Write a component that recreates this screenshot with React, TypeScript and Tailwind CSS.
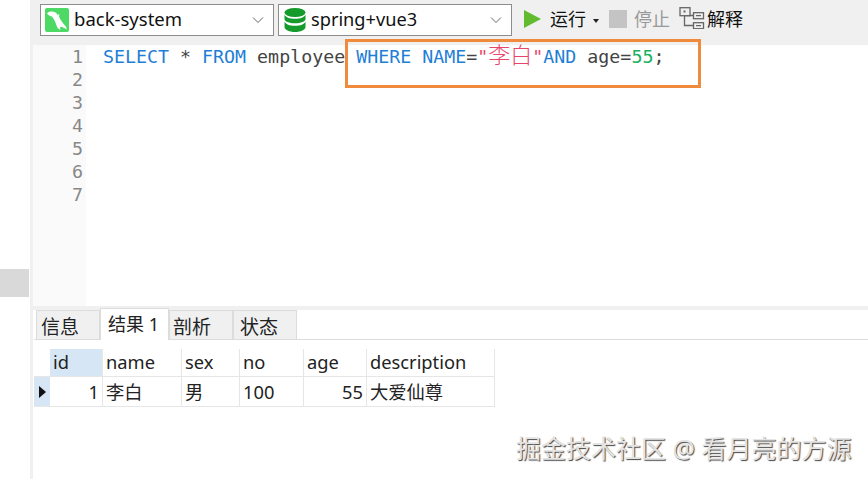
const uiFont = "font-['Noto_Sans','Noto_Sans_CJK_SC',sans-serif]";

function Chevron() {
  return (
    <svg width="12" height="8" viewBox="0 0 12 8" fill="none" stroke="#666" strokeWidth="1">
      <path d="M1 1.5l5 5 5-5" />
    </svg>
  );
}

function MysqlIcon() {
  return (
    <svg width="24" height="24" viewBox="0 0 24 24" className="shrink-0">
      <rect width="24" height="24" rx="2" fill="#4cd964" />
      <path
        d="M2 5.500C4 3 8 3 10.500 4.500c1 .5 1.500 1.500 2 2.500.5-.8 1.200-1 2-.8-.5 1-.6 2-.2 3 1 2.500 3 5 5.700 8.300 1 1 1.500 2.500 2 4-2.500-1.500-4.500-2.500-6.500-2.800-.5 1-.5 2 0 3.300-2-.8-3.500-2.500-4.200-5C10.500 14 9 11 7 8.500 5.500 8.300 3.500 7.500 2 5.500z"
        fill="#fff"
      />
    </svg>
  );
}

function DbIcon() {
  return (
    <svg width="24" height="24" viewBox="0 0 24 24" className="shrink-0">
      <ellipse cx="12" cy="4.500" rx="10.500" ry="4.500" fill="#159a2c" />
      <path d="M1.500 6.500V11c0 2.500 4.700 4.300 10.500 4.300s10.500-1.800 10.500-4.300V6.500c-1 2.800-5 4.300-10.500 4.300S2.500 9.300 1.500 6.500z" fill="#159a2c" />
      <path d="M1.500 13.500V19c0 2.800 4.700 5 10.500 5s10.500-2.200 10.500-5v-5.500c-1 2.800-5 4.300-10.500 4.300S2.500 16.300 1.500 13.500z" fill="#159a2c" />
    </svg>
  );
}

function ExplainIcon() {
  return (
    <svg width="26" height="22" viewBox="0 0 26 22" fill="#f0f0f0" stroke="#666" strokeWidth="1.300" className="shrink-0">
      <path d="M5.500 9v9.500H14M5.500 8.500v0M5.500 8.500H14" fill="none" />
      <rect x="1" y="0.700" width="10" height="8" />
      <rect x="4.500" y="3.500" width="2" height="2" fill="#666" stroke="none" />
      <rect x="14.500" y="5.700" width="10" height="6" />
      <rect x="14.500" y="15.700" width="10" height="6" />
      <path d="M17 8.700h5M17 18.700h5" fill="none" />
    </svg>
  );
}

function Combo({ icon, label, width, size, gap }: { icon: React.ReactNode; label: string; width: string; size: string; gap: string }) {
  return (
    <div className={`${width} h-[32px] border border-[#8c8c8c] bg-white flex items-center pl-[4px] pr-[9px]`}>
      {icon}
      <span className={`${gap} ${size} text-[#111] flex-1 leading-none -mt-[2px]`}>{label}</span>
      <Chevron />
    </div>
  );
}

function Tab({ label, active, width, pad }: { label: string; active?: boolean; width: string; pad: string }) {
  if (active) {
    return (
      <div className={`${width} h-[32px] bg-white border-x border-t border-[#dcdcdc] ${pad} pt-[3px] text-[18px] leading-[24px] text-[#222] -mb-px relative`}>
        {label}
      </div>
    );
  }
  return (
    <div className={`${width} h-[29px] bg-[#f0f0f0] border-r border-t border-l border-[#dcdcdc] ${pad} pt-[4px] text-[19px] leading-[24px] text-[#222]`}>
      {label}
    </div>
  );
}

const columns = "grid-cols-[16px_53px_79px_58px_64px_63px_128px]";

function HeaderCell({ label, active }: { label: string; active?: boolean }) {
  return (
    <div className={`border-r border-b border-[#e6e6e6] pl-[3px] leading-[26px] h-[28px] ${active ? "bg-[#d6e6f5]" : "bg-white"}`}>
      {label}
    </div>
  );
}

function Cell({ label, right }: { label: string; right?: boolean }) {
  return (
    <div className={`border-r border-b border-[#e6e6e6] leading-[29px] ${right ? "text-right pr-[3px]" : "pl-[3px]"}`}>
      {label}
    </div>
  );
}

export default function App() {
  return (
    <div className={`${uiFont} relative flex w-[868px] h-[479px] overflow-hidden bg-white`}>
      {/* left connection list */}
      <div className="w-[30px] shrink-0">
        <div className="mt-[269px] h-[28px] w-[29px] bg-[#d9d9d9]" />
      </div>

      <div className="flex-1 flex flex-col min-w-0 border-l-[3px] border-[#f0f0f0]">
        {/* toolbar */}
        <div className="h-[45px] shrink-0 bg-[#f0f0f0] flex items-start pt-[4px] pl-[7px] text-[18px]">
          <Combo icon={<MysqlIcon />} label="back-system" width="w-[234px]" size="text-[18.5px]" gap="ml-[5px]" />
          <div className="w-[4px]" />
          <Combo icon={<DbIcon />} label="spring+vue3" width="w-[234px]" size="text-[18.2px]" gap="ml-[4px]" />
          <svg width="18" height="18" viewBox="0 0 18 18" className="ml-[12px] mt-[6px]">
            <path d="M0 0l17 9-17 9z" fill="#62bb2e" />
          </svg>
          <span className="ml-[8px] mt-[2px] leading-[26px] text-[#111]">运行</span>
          <svg width="6" height="4" viewBox="0 0 6 4" className="ml-[7px] mt-[15px]">
            <path d="M0 0h6L3 4z" fill="#222" />
          </svg>
          <div className="ml-[10px] mt-[6px] w-[18px] h-[18px] bg-[#c4c4c4]" />
          <span className="ml-[7px] mt-[2px] leading-[26px] text-[#999]">停止</span>
          <div className="ml-[9px] mt-[3px]">
            <ExplainIcon />
          </div>
          <span className="ml-[2px] mt-[2px] leading-[26px] text-[#111]">解释</span>
        </div>

        {/* editor */}
        <div className="h-[261px] shrink-0 flex font-['DejaVu_Sans_Mono','Noto_Sans_CJK_SC',monospace] text-[18.3px] leading-[23px]">
          <div className="w-[53px] shrink-0 bg-[#fafafa] text-right pr-[3px] text-[#888]">
            {[1, 2, 3, 4, 5, 6, 7].map((n) => (
              <div key={n}>{n}</div>
            ))}
          </div>
          <div className="pl-[17px] whitespace-pre h-[24px] text-[#444]">
            <span className="text-[#1f7fd6]">SELECT</span> * <span className="text-[#1f7fd6]">FROM</span> employee{" "}
            <span className="text-[#1f7fd6]">WHERE NAME</span>=<span className="text-[#e8456b]">"<span className="text-[22px] leading-[0] font-['Noto_Sans_CJK_SC',sans-serif] font-light">李白</span>"</span>
            <span className="text-[#1f7fd6]">AND</span> age=<span className="text-[#19b060]">55</span>;
          </div>
        </div>

        {/* splitter */}
        <div className="h-[4px] shrink-0 bg-[#f0f0f0]" />

        {/* result tabs */}
        <div className="h-[28px] mt-[2px] ml-[1px] shrink-0 flex items-end border-b border-[#dcdcdc] pl-[2px]">
          <Tab label="信息" width="w-[64px]" pad="pl-[4px]" />
          <Tab label="结果 1" active width="w-[69px]" pad="pl-[7px]" />
          <Tab label="剖析" width="w-[64px]" pad="pl-[3px]" />
          <Tab label="状态" width="w-[64px]" pad="pl-[6px]" />
        </div>

        {/* result grid */}
        <div className={`ml-[1px] mt-[9px] w-[463px] grid ${columns} text-[18.3px] text-[#222]`}>
          <div className="border-b border-[#e6e6e6]" />
          <HeaderCell label="id" active />
          <HeaderCell label="name" />
          <HeaderCell label="sex" />
          <HeaderCell label="no" />
          <HeaderCell label="age" />
          <HeaderCell label="description" />
          <div className="bg-[#d6e6f5] border-b border-[#e6e6e6] flex items-center justify-center">
            <svg width="7" height="12" viewBox="0 0 7 12">
              <path d="M0 0l7 6-7 6z" fill="#111" />
            </svg>
          </div>
          <Cell label="1" right />
          <Cell label="李白" />
          <Cell label="男" />
          <Cell label="100" />
          <Cell label="55" right />
          <Cell label="大爱仙尊" />
        </div>
      </div>

      {/* highlight box drawn over the editor */}
      <div className="absolute left-[345px] top-[39px] w-[356px] h-[49px] border-[3px] border-[#f08a3c]" />

      {/* watermark */}
      <div className="absolute left-[516px] top-[432px] whitespace-nowrap text-[25px] leading-[32px] text-[#e4e4e4] [text-shadow:1px_1px_1px_#444]">
        掘金技术社区 @ 看月亮的方源
      </div>
    </div>
  );
}
